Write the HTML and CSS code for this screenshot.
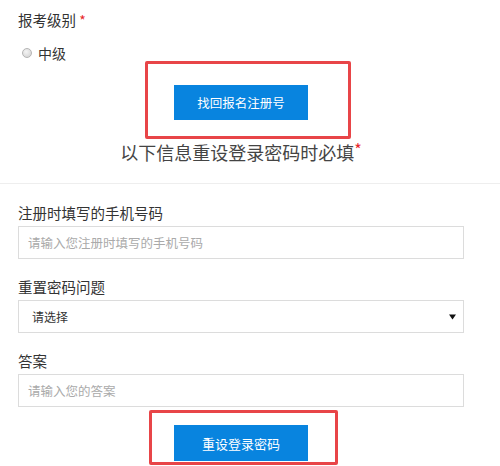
FILE: index.html
```html
<!DOCTYPE html>
<html lang="zh-CN">
<head>
<meta charset="utf-8">
<title>重设登录密码</title>
<link rel="stylesheet" href="styles.css">
</head>
<body>
<div class="page">
  <div class="section">
    <div class="label">报考级别 <span class="req">*</span></div>
    <div class="radio-row"><span class="radio"></span><span class="radio-text">中级</span></div>
    <div class="btn-row"><button class="btn">找回报名注册号</button></div>
    <div class="notice">以下信息重设登录密码时必填<span class="req">*</span></div>
  </div>
  <div class="divider"></div>
  <div class="section fields">
    <div class="field">
      <div class="label">注册时填写的手机号码</div>
      <div class="input placeholder">请输入您注册时填写的手机号码</div>
    </div>
    <div class="field">
      <div class="label">重置密码问题</div>
      <div class="input select"><span>请选择</span><svg class="caret" width="7" height="6" viewBox="0 0 7 6"><path d="M0 0.5H7L3.5 5.5Z" fill="#111"/></svg></div>
    </div>
    <div class="field">
      <div class="label">答案</div>
      <div class="input placeholder">请输入您的答案</div>
    </div>
    <div class="btn-row last"><button class="btn">重设登录密码</button></div>
  </div>
  <div class="mark mark1"></div>
  <div class="mark mark2"></div>
</div>
</body>
</html>
```
FILE: styles.css
```css
html, body {
  margin: 0;
  padding: 0;
  background: #fff;
}
body {
  font-family: "Noto Sans CJK SC", "Noto Sans", sans-serif;
  color: #333;
  overflow: hidden;
}
.page {
  position: relative;
  width: 500px;
  height: 466px;
  overflow: hidden;
}
.section {
  padding: 10px 36px 0 18px;
  display: flex;
  flex-direction: column;
}
.label {
  font-size: 14.5px;
  line-height: 20px;
  color: #333;
}
.req {
  color: #e8262a;
  font-size: 14px;
}
.radio-row {
  margin-top: 13px;
  display: flex;
  align-items: center;
  height: 20px;
  padding-left: 4px;
}
.radio {
  width: 8px;
  height: 8px;
  border-radius: 50%;
  border: 1px solid #b5b5b5;
  background: radial-gradient(circle at 40% 35%, #f4f4f4, #cfcfcf);
  margin-right: 6px;
}
.radio-text {
  font-size: 14px;
  line-height: 20px;
  color: #333;
}
.btn-row {
  display: flex;
  justify-content: center;
  margin-top: 22px;
}
.btn {
  width: 134px;
  height: 35px;
  border: none;
  background: #0884df;
  color: #fff;
  font-family: "Noto Sans CJK SC", sans-serif;
  font-size: 12.5px;
  padding: 0;
  cursor: pointer;
}
.notice {
  margin-top: 20px;
  text-align: center;
  font-size: 18px;
  line-height: 24px;
  color: #444;
}
.notice .req {
  font-size: 16px;
  vertical-align: top;
  line-height: 18px;
}
.divider {
  height: 1px;
  background: #eeeeee;
  margin-top: 19px;
}
.fields {
  padding-top: 19px;
}
.field {
  display: flex;
  flex-direction: column;
}
.field + .field {
  margin-top: 18px;
}
.field .label {
  margin-bottom: 3px;
}
.input {
  box-sizing: border-box;
  height: 33px;
  border: 1px solid #dcdcdc;
  padding: 0 9px;
  display: flex;
  align-items: center;
  font-size: 12.5px;
}
.placeholder {
  color: #aaa;
}
.select {
  justify-content: space-between;
  padding: 0 7px 0 13px;
  color: #333;
  font-size: 12px;
}
.caret {
  display: block;
}
.btn-row.last {
  margin-top: 18px;
}
.btn-row.last .btn {
  height: 36px;
  font-size: 13px;
}
.mark {
  position: absolute;
  box-sizing: border-box;
  border: 3px solid #e84548;
  border-radius: 2px;
}
.mark1 {
  left: 145px;
  top: 61px;
  width: 206px;
  height: 78px;
}
.mark2 {
  left: 149px;
  top: 410px;
  width: 189px;
  height: 55px;
}
```
